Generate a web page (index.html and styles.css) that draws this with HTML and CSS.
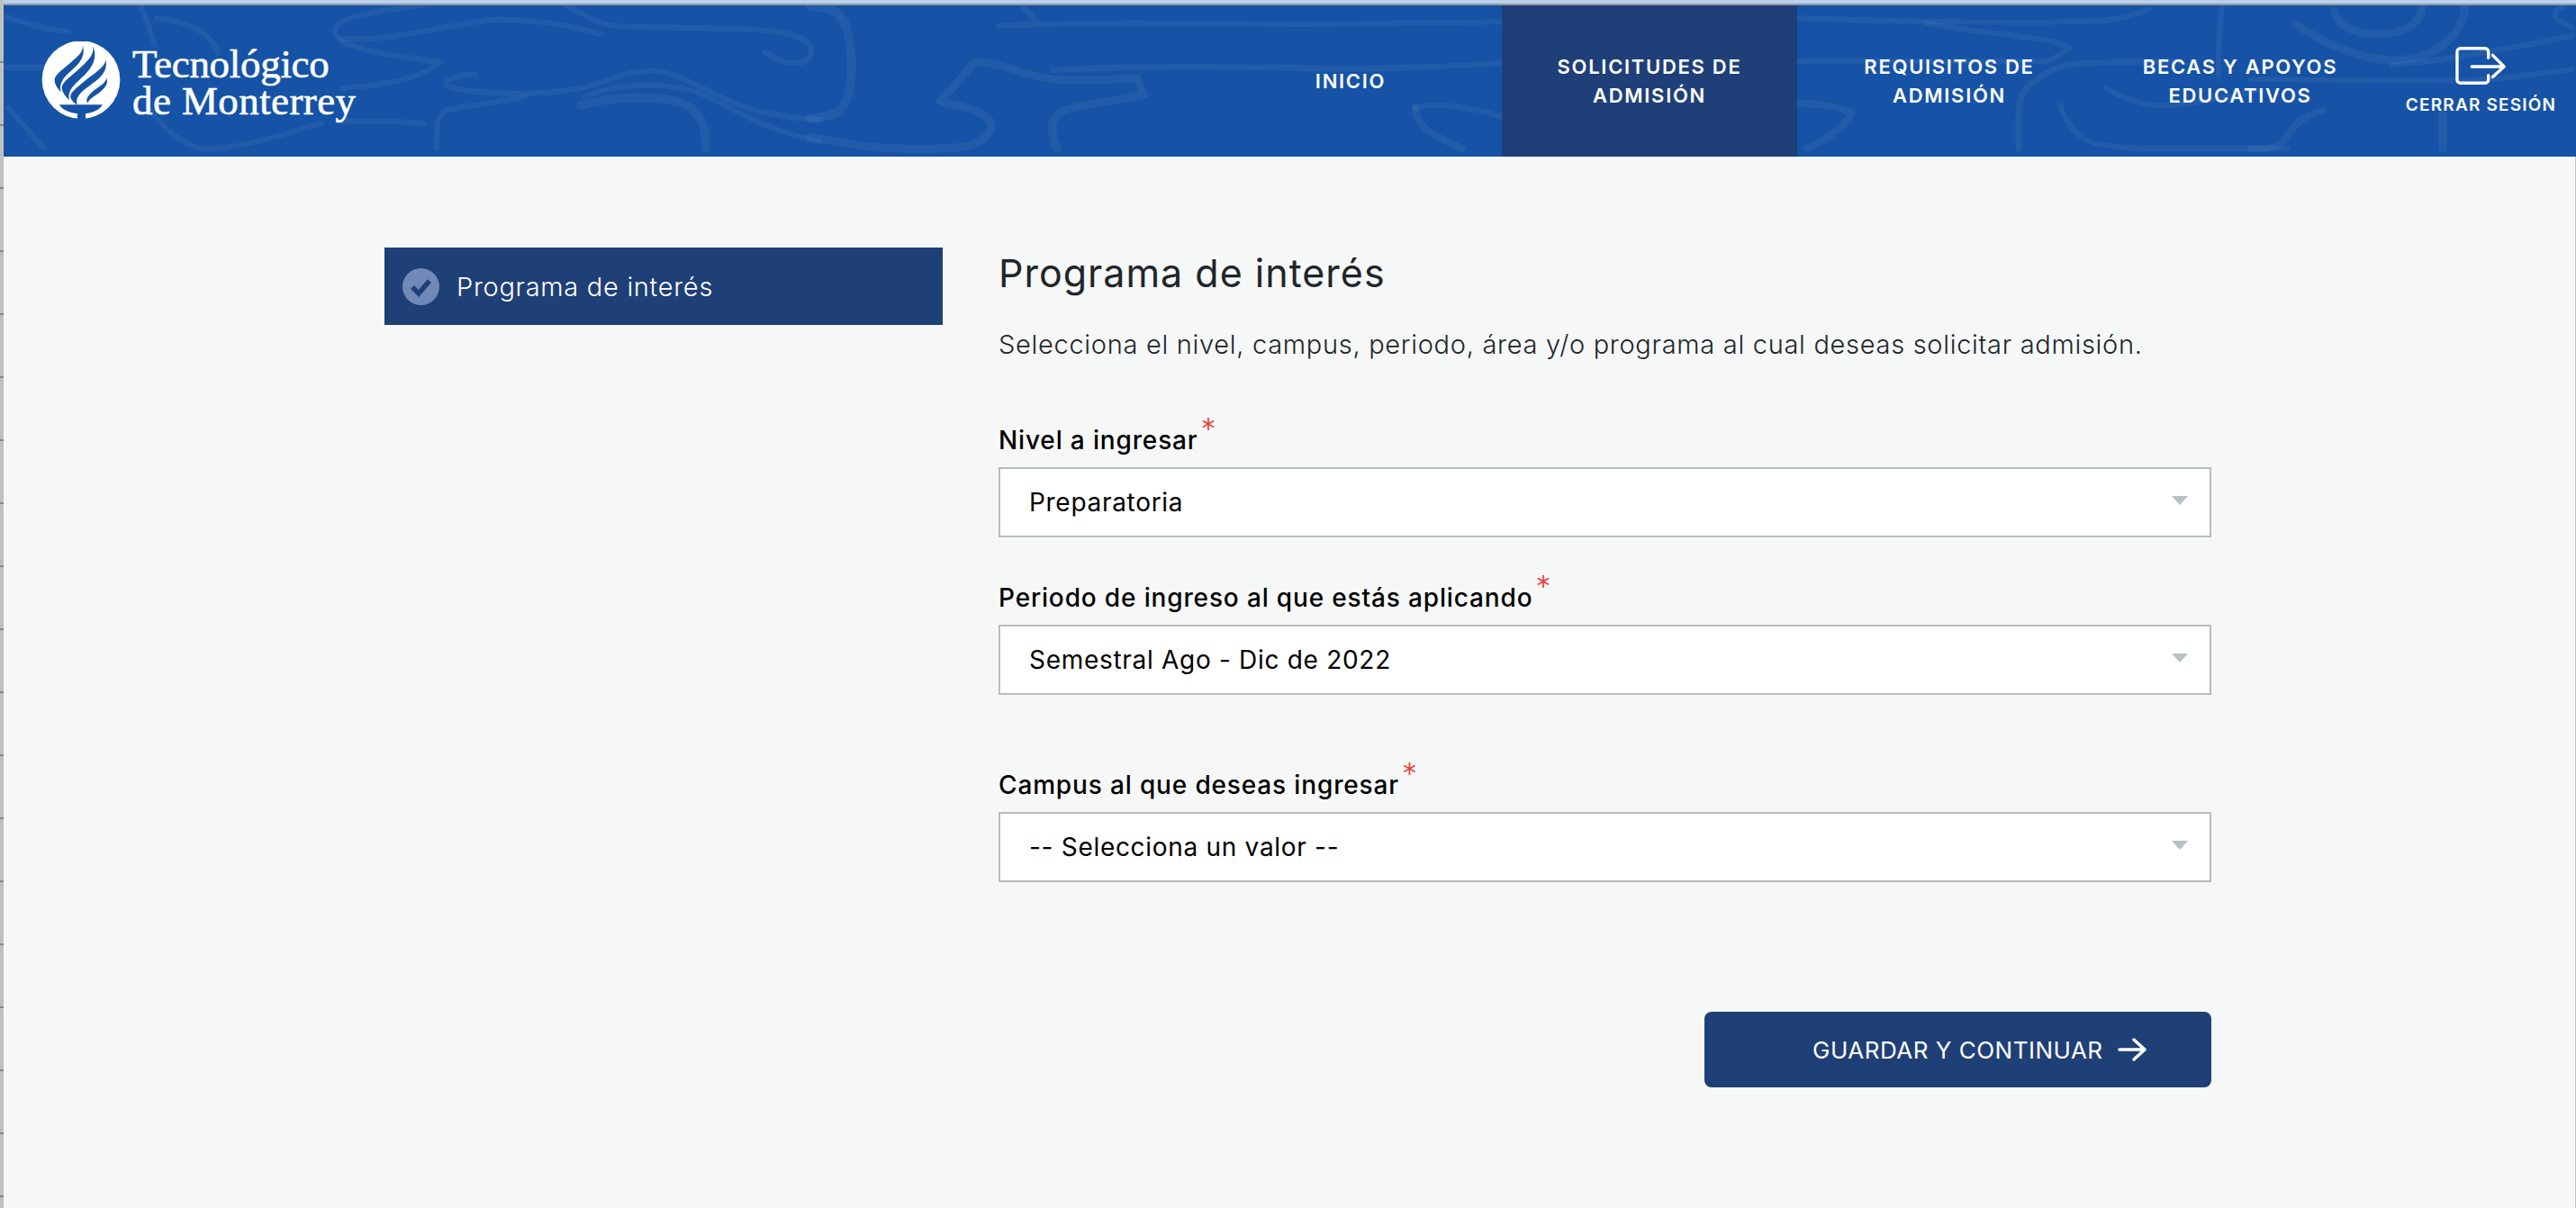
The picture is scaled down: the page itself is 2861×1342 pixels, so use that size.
FILE: index.html
```html
<!DOCTYPE html>
<html lang="es">
<head>
  <meta charset="UTF-8">
  <title>Solicitudes de admisión</title>
  <link rel="stylesheet" href="styles.css">
</head>
<body>
  <div class="edge"></div>
  <div class="page">
    <div class="topline"></div>

    <header class="header">
      <!-- faint line drawing behind the header -->
      <svg class="header-art" viewBox="4 6 2857 168" preserveAspectRatio="none" fill="none" stroke-linecap="round">
        <g stroke-width="6">
          <path d="M4 17C30 28 50 32 76 35"/>
          <path d="M156 6C165 25 168 40 172 50"/>
          <path d="M174 20C210 24 235 36 242 60"/>
          <path d="M4 75H60"/>
          <path d="M9 120L49 165"/>
          <path d="M165 120C180 140 200 160 223 165C260 168 310 150 357 137"/>
          <path d="M470 6C420 12 370 18 372 35C375 55 430 60 488 69C470 88 420 95 380 98"/>
          <path d="M380 43C420 46 450 38 542 22C590 20 630 28 667 38"/>
          <path d="M630 7C650 15 660 28 690 29C760 32 830 30 860 35C895 40 905 50 900 62C893 75 870 72 850 58"/>
          <path d="M527 82C505 84 490 90 497 95C510 104 600 108 650 97C680 88 700 78 725 79C760 80 800 115 850 125C870 130 890 132 910 133"/>
          <path d="M650 107C680 95 720 90 768 100C790 108 810 120 830 130C860 145 885 152 910 157"/>
          <path d="M583 107C550 115 510 118 495 123C484 128 485 145 485 165"/>
          <path d="M645 117C680 106 740 105 765 118C782 130 784 145 784 165" stroke-width="10"/>
          <path d="M380 135C410 133 440 135 471 137"/>
          <path d="M900 7C925 8 934 14 940 30C948 60 948 95 937 118C930 128 915 130 900 132" stroke-width="10"/>
          <path d="M1136 7L1152 25C1140 27 1120 28 1106 29C1220 24 1320 26 1430 27C1500 27 1600 25 1668 24"/>
          <path d="M1170 78C1260 73 1350 74 1430 75C1500 78 1600 75 1668 70"/>
          <path d="M900 152C940 160 970 165 1001 165C1040 166 1070 165 1082 160C1100 152 1105 140 1098 132C1085 120 1060 118 1045 112L1082 70C1100 65 1140 85 1170 88C1210 90 1240 88 1263 87L1270 105C1240 112 1200 115 1176 125C1165 135 1168 150 1174 165" stroke-width="9"/>
          <path d="M1572 120C1590 112 1640 120 1668 130"/>
          <path d="M1572 120C1572 140 1590 150 1624 165" stroke-width="8"/>
          <path d="M1997 20C2100 24 2250 26 2338 23C2360 20 2375 15 2388 10"/>
          <path d="M2139 25C2180 35 2240 38 2280 46L2298 53C2290 60 2280 66 2272 68C2180 70 2080 66 1997 68"/>
          <path d="M1997 115C2020 115 2040 118 2056 125C2050 140 2030 155 2007 165" stroke-width="8"/>
          <path d="M2242 165C2242 140 2240 115 2248 100C2265 85 2280 75 2298 72C2340 68 2380 68 2421 68" stroke-width="7"/>
          <path d="M2338 98C2360 110 2385 118 2405 117C2440 115 2475 108 2507 100"/>
          <path d="M2288 117C2295 140 2310 155 2330 160C2360 166 2395 165 2421 165H2540"/>
          <path d="M2468 6C2464 30 2464 60 2464 83"/>
          <path d="M2593 13C2595 28 2615 38 2640 38C2665 38 2690 28 2690 6" stroke-width="9"/>
          <path d="M2550 27C2575 45 2620 67 2660 67C2700 65 2735 45 2738 6" stroke-width="9"/>
          <path d="M2657 72C2700 70 2780 55 2857 40"/>
          <path d="M2500 88C2600 88 2680 92 2767 88C2800 85 2830 80 2857 77"/>
          <path d="M2580 123C2550 130 2545 145 2535 158C2528 165 2515 165 2500 165" stroke-width="8"/>
          <path d="M2713 127V165" stroke-width="10"/>
          <path d="M2847 7C2835 12 2835 20 2845 25L2857 30"/>
        </g>
      </svg>

      <a class="logo" href="#">
        <svg class="logo-mark" viewBox="48 48 264 264">
          <circle cx="180" cy="176" r="130" fill="#fff"/>
          <g class="logo-flames">
            <path d="M184 56C192 82 168 98 148 116C122 140 100 152 92 172C90 190 102 205 113 217C106 192 118 172 140 152C168 128 200 100 184 56Z"/>
            <path d="M220 64C226 95 195 120 168 145C140 170 108 190 118 212C122 225 132 235 141 243C134 218 150 198 175 176C205 148 240 115 220 64Z"/>
            <path d="M263 110C258 135 225 152 195 178C165 203 138 222 146 238C150 248 158 255 167 259C160 235 178 218 205 198C235 175 270 155 263 110Z"/>
            <path d="M266 170C260 190 235 200 215 218C200 232 195 245 202 253C210 235 225 232 245 215C262 200 270 190 266 170Z"/>
            <path d="M108 259H251C245 275 220 285 195 289V312H168V289C140 285 115 275 108 259Z"/>
          </g>
        </svg>
        <span class="logo-text">
          <span class="logo-line">Tecnológico</span>
          <span class="logo-line wide">de Monterrey</span>
        </span>
      </a>

      <nav class="nav">
        <a class="nav-item" href="#">INICIO</a>
        <a class="nav-item active" href="#">SOLICITUDES DE<br>ADMISIÓN</a>
        <a class="nav-item" href="#">REQUISITOS DE<br>ADMISIÓN</a>
        <a class="nav-item" href="#">BECAS Y APOYOS<br>EDUCATIVOS</a>
        <a class="nav-item logout" href="#">
          <svg class="logout-icon" viewBox="0 0 58 44" fill="none" stroke="#fff" stroke-width="3.5" stroke-linecap="round" stroke-linejoin="round">
            <path d="M38 13V6C38 4 36.500 2 34 2H6C3.500 2 2 4 2 6V38C2 40 3.500 42 6 42H34C36.500 42 38 40 38 38V33"/>
            <path d="M19 23H56M43 10L56 23L43 35"/>
          </svg>
          <span>CERRAR SESIÓN</span>
        </a>
      </nav>
    </header>

    <main class="main">
      <aside class="sidebar">
        <div class="step">
          <svg class="step-check" viewBox="0 0 41 41">
            <circle cx="20.500" cy="20.500" r="20.500" fill="#7189b8"/>
            <path d="M11 21L18 28L30 14" fill="none" stroke="#1f3f77" stroke-width="5.500"/>
          </svg>
          <span>Programa de interés</span>
        </div>
      </aside>

      <section class="content">
        <h1 class="title">Programa de interés</h1>
        <p class="intro">Selecciona el nivel, campus, periodo, área y/o programa al cual deseas solicitar admisión.</p>

        <div class="field first">
          <label class="field-label">Nivel a ingresar<span class="req">*</span></label>
          <div class="select-wrap">
            <select><option>Preparatoria</option></select>
          </div>
        </div>

        <div class="field second">
          <label class="field-label">Periodo de ingreso al que estás aplicando<span class="req">*</span></label>
          <div class="select-wrap">
            <select><option>Semestral Ago - Dic de 2022</option></select>
          </div>
        </div>

        <div class="field third">
          <label class="field-label">Campus al que deseas ingresar<span class="req">*</span></label>
          <div class="select-wrap">
            <select><option>-- Selecciona un valor --</option></select>
          </div>
        </div>

        <div class="actions">
          <button class="save" type="button">
            <span>GUARDAR Y CONTINUAR</span>
            <svg class="save-arrow" viewBox="0 0 32 28" fill="none" stroke="#fff" stroke-width="3.500" stroke-linecap="round" stroke-linejoin="round">
              <path d="M2 14H30M18 3L30 14L18 25"/>
            </svg>
          </button>
        </div>
      </section>
    </main>
  </div>
</body>
</html>
```

FILE: styles.css
```css
* {
  box-sizing: border-box;
}

html, body {
  height: 100%;
}

body {
  display: flex;
  margin: 0;
  overflow: hidden;
  font-family: Inter, "Liberation Sans", sans-serif;
  background-color: #f6f8f8;
  color: #212529;
}

a {
  color: inherit;
  text-decoration: none;
}

.edge {
  flex: 0 0 4px;
  background: repeating-linear-gradient(#bfc1c1 0 68px, #85888a 68px 70px);
}

.page {
  flex: 1;
  display: flex;
  flex-direction: column;
  min-width: 0;
}

.topline {
  height: 6px;
  background-color: #b9cfea;
  border-bottom: 2px solid #8b96a5;
}

/* header */
.header {
  position: relative;
  display: flex;
  justify-content: space-between;
  height: 168px;
  background-color: #1653a6;
}

.header-art {
  position: absolute;
  top: 0;
  left: 0;
  width: 100%;
  height: 100%;
  stroke: rgba(255, 255, 255, 0.05);
}

.logo {
  position: relative;
  display: flex;
  align-items: flex-start;
  gap: 13px;
  padding: 40px 0 0 42px;
  color: #fff;
}

.logo-mark {
  width: 88px;
  height: 88px;
}

.logo-flames path {
  fill: #1653a6;
}

.logo-text {
  margin-top: 5px;
  font-family: "Liberation Serif", serif;
  font-size: 45px;
  line-height: 41px;
  -webkit-text-stroke: 0.6px #fff;
}

.logo-line {
  display: block;
  letter-spacing: -0.3px;
}

.logo-line.wide {
  letter-spacing: 0.4px;
}

.nav {
  position: relative;
  display: grid;
  grid-template-columns: 336px 328px 338px 308px 219px;
  height: 100%;
}

.nav-item {
  display: flex;
  align-items: center;
  justify-content: center;
  text-align: center;
  color: #fff;
  font-size: 22px;
  font-weight: 600;
  line-height: 32px;
  letter-spacing: 1.7px;
}

.nav-item.active {
  background-color: #1f3f78;
}

.logout {
  flex-direction: column;
  gap: 9px;
  padding-left: 8px;
  font-size: 19px;
  line-height: 26px;
  letter-spacing: 1.2px;
}

.logout-icon {
  width: 56px;
  height: 44px;
  margin-left: -2px;
}

/* body of the page */
.main {
  flex: 1;
  display: flex;
  gap: 62px;
  padding: 101px 0 0 423px;
  border-right: 1px solid #c4c6c6;
}

.sidebar {
  flex: 0 0 620px;
}

.step {
  display: flex;
  align-items: center;
  gap: 19px;
  height: 86px;
  padding-left: 20px;
  background-color: #1f3f77;
  color: #fff;
  font-size: 29px;
  font-weight: 300;
  letter-spacing: 0.7px;
}

.step-check {
  width: 41px;
  height: 41px;
}

.content {
  flex: 0 0 1347px;
}

.title {
  margin: 0;
  font-size: 43px;
  font-weight: 400;
  line-height: 56px;
  letter-spacing: 1px;
}

.intro {
  margin: 34px 0 0;
  font-size: 29px;
  font-weight: 300;
  line-height: 36px;
  letter-spacing: 0.7px;
}

.field-label {
  display: block;
  height: 50px;
  font-size: 28px;
  font-weight: 500;
  line-height: 40px;
  letter-spacing: 0.85px;
  color: #000;
}

.req {
  position: relative;
  top: -10px;
  margin-left: 3px;
  font-size: 34px;
  font-weight: 300;
  line-height: 1;
  color: #e8443f;
}

.field.first {
  margin-top: 68px;
}

.field.second {
  margin-top: 47px;
}

.field.third {
  margin-top: 80px;
}

.select-wrap {
  position: relative;
}

.select-wrap::after {
  content: "";
  position: absolute;
  top: 32px;
  right: 26px;
  border-style: solid;
  border-width: 10px 9.500px 0;
  border-color: #b5c1c3 transparent transparent;
}

select {
  display: block;
  width: 100%;
  height: 78px;
  padding: 0 32px;
  appearance: none;
  border: 2px solid #b9bcbc;
  border-radius: 0;
  background-color: #fff;
  font-family: inherit;
  font-size: 28px;
  letter-spacing: 0.7px;
  color: #000;
}

.actions {
  display: flex;
  justify-content: flex-end;
  margin-top: 144px;
}

.save {
  display: flex;
  align-items: center;
  gap: 16px;
  width: 563px;
  height: 84px;
  padding: 0 0 0 120px;
  border: none;
  border-radius: 8px;
  background-color: #1f3f77;
  color: #fff;
  font-family: inherit;
  font-size: 26px;
  font-weight: 400;
  letter-spacing: 0.5px;
  cursor: pointer;
}

.save-arrow {
  width: 32px;
  height: 28px;
}
```
